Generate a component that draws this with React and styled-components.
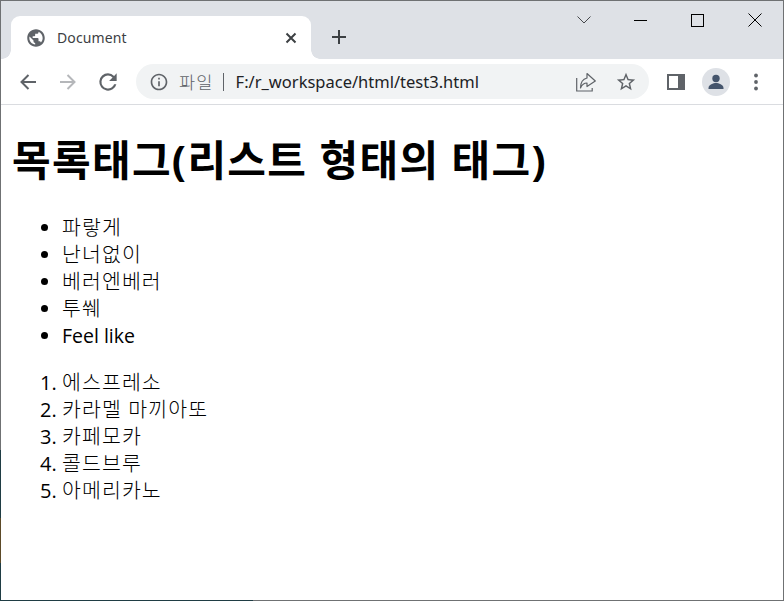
import React from "react";
import styled, { createGlobalStyle } from "styled-components";

const GlobalStyle = createGlobalStyle`
    html, body {
        margin: 0;
        padding: 0;
        background: #ffffff;
    }
`;

const uiFont = `"Noto Sans", "Noto Sans CJK KR", sans-serif`;
const pageFont = `"Open Sans", "Noto Sans CJK KR", sans-serif`;

const Window = styled.div`
    position: relative;
    box-sizing: border-box;
    width: 784px;
    height: 601px;
    display: flex;
    flex-direction: column;
    border: 1px solid #6f7173;
    background: #ffffff;
    overflow: hidden;
`;

/* The desktop wallpaper shows through on the window's lower left edges */
const EdgeLeft = styled.div`
    position: fixed;
    left: 0;
    top: 450px;
    width: 1px;
    height: 151px;
    background: linear-gradient(#1f3d44 0 45%, #5c4a28 45% 75%, #1f3d44 75%);
`;

const EdgeBottom = styled.div`
    position: fixed;
    left: 0;
    top: 600px;
    width: 253px;
    height: 1px;
    background: #1f3d44;
`;

const TabStrip = styled.div`
    height: 58px;
    flex: none;
    display: flex;
    align-items: flex-end;
    padding-left: 10px;
    background: #dee1e6;
    position: relative;
`;

const Tab = styled.div`
    position: relative;
    box-sizing: border-box;
    width: 300px;
    height: 43px;
    display: flex;
    align-items: center;
    gap: 11px;
    padding: 0 14px 0 15px;
    background: #ffffff;
    border-radius: 9px 9px 0 0;

    /* the little flares where the tab meets the toolbar */
    &::before,
    &::after {
        content: "";
        position: absolute;
        bottom: 0;
        width: 9px;
        height: 9px;
    }

    &::before {
        left: -9px;
        background: radial-gradient(circle at 0 0, #dee1e6 8.5px, #ffffff 9px);
    }

    &::after {
        right: -9px;
        background: radial-gradient(circle at 100% 0, #dee1e6 8.5px, #ffffff 9px);
    }
`;

const TabTitle = styled.span`
    flex: 1;
    font: 14px ${uiFont};
    color: #3c4043;
    letter-spacing: 0.1px;
`;

const NewTab = styled.div`
    width: 28px;
    height: 28px;
    margin: 0 0 8px 14px;
    display: flex;
    align-items: center;
    justify-content: center;
`;

const CaptionButtons = styled.div`
    position: absolute;
    top: 0;
    right: 0;
    height: 38px;
    display: flex;
    align-items: center;
`;

const CaptionButton = styled.div`
    width: 57px;
    height: 38px;
    display: flex;
    align-items: center;
    justify-content: center;
`;

const Toolbar = styled.div`
    height: 46px;
    flex: none;
    box-sizing: border-box;
    display: flex;
    align-items: center;
    padding: 0 7px 0 7px;
    background: #ffffff;
    border-bottom: 1px solid #dadce0;
`;

const ToolButton = styled.div`
    width: ${(props) => props.$width || 40}px;
    height: 34px;
    flex: none;
    display: flex;
    align-items: center;
    justify-content: center;
`;

const Omnibox = styled.div`
    box-sizing: border-box;
    width: 513px;
    height: 35px;
    margin: 0 8px;
    flex: none;
    display: flex;
    align-items: center;
    padding: 0 3px 0 13px;
    border-radius: 18px;
    background: #f1f3f4;
`;

const Scheme = styled.span`
    margin-left: 10px;
    font: 300 17.5px ${uiFont};
    letter-spacing: 1.2px;
    color: #5f6368;
`;

const Divider = styled.span`
    width: 1px;
    height: 18px;
    margin: 0 12px 0 9px;
    background: #5f6368;
`;

const Url = styled.span`
    flex: 1;
    font: 16.5px ${uiFont};
    color: #202124;
`;

const Page = styled.main`
    flex: 1;
    padding: 0 11px;
    color: #000000;
    font-family: ${pageFont};
    font-weight: 400;
`;

const Heading = styled.h1`
    margin: 28px 0 0;
    font-size: 42px;
    font-weight: 700;
    letter-spacing: 1.32px;
    line-height: 54px;
`;

const BulletList = styled.ul`
    margin: 27px 0 0;
    padding-left: 50px;
`;

const NumberList = styled.ol`
    margin: 20px 0 0;
    padding-left: 50px;
`;

const Item = styled.li`
    height: 27px;
    line-height: 27px;
    font-size: ${(props) => (props.$latin ? 19.5 : 20.5)}px;
    font-weight: ${(props) => (props.$latin ? 400 : 300)};
    letter-spacing: ${(props) => (props.$latin ? 0 : 1.1)}px;

    &::marker {
        font-size: 20px;
        font-weight: 400;
        letter-spacing: 0;
    }
`;

const Glyph = styled.svg`
    display: block;
    flex: none;
`;

const bullets = ["파랗게", "난너없이", "베러엔베러", "투쒜", "Feel like"];
const drinks = ["에스프레소", "카라멜 마끼아또", "카페모카", "콜드브루", "아메리카노"];

function App() {
    return (
        <>
            <GlobalStyle />
            <Window>
                <TabStrip>
                    <Tab>
                        <Glyph width="20" height="20" viewBox="0 0 24 24" fill="#5f6368">
                            <path d="M12 1.5C6.2 1.5 1.5 6.2 1.5 12S6.2 22.5 12 22.5 22.5 17.8 22.5 12 17.8 1.5 12 1.5zm-1 18.4c-3.9-.5-7-3.8-7-7.9 0-.6.1-1.2.2-1.8L9 15v1c0 1.1.9 2 2 2v1.9zm6.9-2.5c-.3-.8-1-1.4-1.9-1.4h-1v-3c0-.6-.4-1-1-1H8v-2h2c.6 0 1-.4 1-1V7h2c1.1 0 2-.9 2-2v-.4c2.9 1.2 5 4.1 5 7.4 0 2.1-.8 4-2.1 5.4z" />
                        </Glyph>
                        <TabTitle>Document</TabTitle>
                        <Glyph width="12" height="12" viewBox="0 0 12 12" stroke="#3c4043" strokeWidth="2" fill="none">
                            <path d="M1.5 1.5l9 9M10.5 1.5l-9 9" />
                        </Glyph>
                    </Tab>
                    <NewTab>
                        <Glyph width="16" height="16" viewBox="0 0 16 16" stroke="#3c4043" strokeWidth="2" fill="none">
                            <path d="M8 1v14M1 8h14" />
                        </Glyph>
                    </NewTab>
                    <CaptionButtons>
                        <CaptionButton>
                            <Glyph width="14" height="8" viewBox="0 0 14 8" stroke="#202124" strokeWidth="0.8" fill="none">
                                <path d="M.5 .5L7 7l6.5-6.5" />
                            </Glyph>
                        </CaptionButton>
                        <CaptionButton>
                            <Glyph width="13" height="1" viewBox="0 0 13 1" stroke="#000" fill="none">
                                <path d="M0 .5h13" />
                            </Glyph>
                        </CaptionButton>
                        <CaptionButton>
                            <Glyph width="13" height="13" viewBox="0 0 13 13" stroke="#000" fill="none">
                                <rect x=".5" y=".5" width="12" height="12" />
                            </Glyph>
                        </CaptionButton>
                        <CaptionButton>
                            <Glyph width="14" height="14" viewBox="0 0 14 14" stroke="#000" fill="none">
                                <path d="M.5 .5l13 13M13.5 .5l-13 13" />
                            </Glyph>
                        </CaptionButton>
                    </CaptionButtons>
                </TabStrip>
                <Toolbar>
                    <ToolButton>
                        <Glyph width="18" height="18" viewBox="0 0 18 18" stroke="#5f6368" strokeWidth="2" fill="none">
                            <path d="M17 9H2.5M9.5 2L2.5 9l7 7" />
                        </Glyph>
                    </ToolButton>
                    <ToolButton>
                        <Glyph width="18" height="18" viewBox="0 0 18 18" stroke="#b5b7ba" strokeWidth="2" fill="none">
                            <path d="M1 9h14.5M8.5 2l7 7-7 7" />
                        </Glyph>
                    </ToolButton>
                    <ToolButton>
                        <Glyph width="26" height="26" viewBox="0 0 24 24" fill="#5f6368">
                            <path d="M17.65 6.35A7.95 7.95 0 0 0 12 4a8 8 0 1 0 7.73 10h-2.08A6 6 0 1 1 12 6c1.66 0 3.14.69 4.22 1.78L13 11h7V4l-2.35 2.35z" />
                        </Glyph>
                    </ToolButton>
                    <Omnibox>
                        <Glyph width="20" height="20" viewBox="0 0 24 24" fill="#5f6368">
                            <path d="M11 7h2v2h-2zm0 4h2v6h-2zm1-9C6.48 2 2 6.48 2 12s4.48 10 10 10 10-4.48 10-10S17.52 2 12 2zm0 18c-4.41 0-8-3.59-8-8s3.59-8 8-8 8 3.59 8 8-3.59 8-8 8z" />
                        </Glyph>
                        <Scheme>파일</Scheme>
                        <Divider />
                        <Url>F:/r_workspace/html/test3.html</Url>
                        <ToolButton $width={40}>
                            <Glyph width="20" height="20" viewBox="0 0 20 20" stroke="#5f6368" strokeWidth="1.2" fill="none">
                                <path d="M.7 6v13h15.5v-3" />
                                <path d="M11 1.5L19.3 9 11 14.5V11C8 11 6 12.5 4.5 16 4.5 11 7 7 11 6z" strokeLinejoin="round" />
                            </Glyph>
                        </ToolButton>
                        <ToolButton $width={40}>
                            <Glyph width="22" height="22" viewBox="0 0 24 24" fill="#5f6368">
                                <path d="M22 9.24l-7.19-.62L12 2 9.19 8.63 2 9.24l5.46 4.73L5.82 21 12 17.27 18.18 21l-1.63-7.03L22 9.24zM12 15.4l-3.76 2.27 1-4.28-3.32-2.88 4.38-.38L12 6.1l1.71 4.04 4.38.38-3.32 2.88 1 4.28L12 15.4z" />
                            </Glyph>
                        </ToolButton>
                    </Omnibox>
                    <ToolButton $width={38}>
                        <Glyph width="18" height="16" viewBox="0 0 18 16" fill="#5f6368">
                            <path d="M0 0h18v16H0zM2 2v12h9V2zM2 2" fillRule="evenodd" />
                        </Glyph>
                    </ToolButton>
                    <ToolButton $width={42}>
                        <Glyph width="28" height="28" viewBox="0 0 28 28">
                            <circle cx="14" cy="14" r="14" fill="#dee1e6" />
                            <circle cx="14" cy="10.5" r="3.7" fill="#45556c" />
                            <path d="M6.5 20c0-3.4 5-5 7.5-5s7.5 1.6 7.5 5v1h-15z" fill="#45556c" />
                        </Glyph>
                    </ToolButton>
                    <ToolButton $width={37}>
                        <Glyph width="4" height="18" viewBox="0 0 4 18" fill="#5f6368">
                            <circle cx="2" cy="2.5" r="1.9" />
                            <circle cx="2" cy="9" r="1.9" />
                            <circle cx="2" cy="15.5" r="1.9" />
                        </Glyph>
                    </ToolButton>
                </Toolbar>
                <Page>
                    <Heading>목록태그(리스트 형태의 태그)</Heading>
                    <BulletList>
                        {bullets.map((text) => (
                            <Item key={text} $latin={text === "Feel like"}>{text}</Item>
                        ))}
                    </BulletList>
                    <NumberList>
                        {drinks.map((text) => (
                            <Item key={text}>{text}</Item>
                        ))}
                    </NumberList>
                </Page>
                <EdgeLeft />
                <EdgeBottom />
            </Window>
        </>
    );
}

export default App;
